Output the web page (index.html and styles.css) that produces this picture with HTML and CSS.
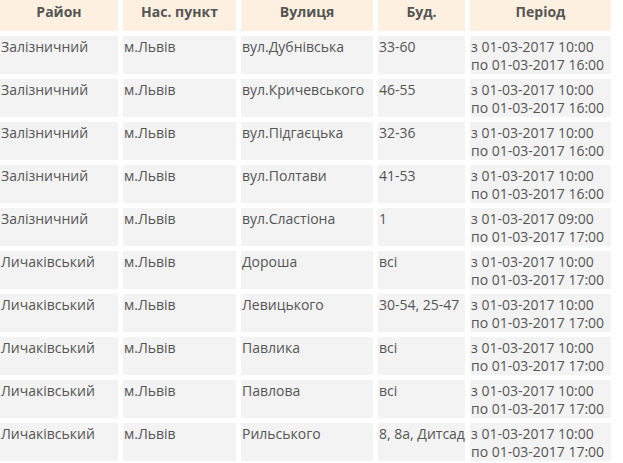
FILE: index.html
```html
<!DOCTYPE html>
<html lang="uk">
<head>
<meta charset="utf-8">
<title>Відключення</title>
<link rel="stylesheet" href="styles.css">
</head>
<body>
<table class="outages">
  <thead>
    <tr>
      <th class="c-district">Район</th>
      <th class="c-town">Нас. пункт</th>
      <th class="c-street">Вулиця</th>
      <th class="c-house">Буд.</th>
      <th class="c-period">Період</th>
    </tr>
  </thead>
  <tbody>
    <tr><td>Залізничний</td><td>м.Львів</td><td>вул.Дубнівська</td><td>33-60</td><td>з 01-03-2017 10:00<br>по 01-03-2017 16:00</td></tr>
    <tr><td>Залізничний</td><td>м.Львів</td><td>вул.Кричевського</td><td>46-55</td><td>з 01-03-2017 10:00<br>по 01-03-2017 16:00</td></tr>
    <tr><td>Залізничний</td><td>м.Львів</td><td>вул.Підгаєцька</td><td>32-36</td><td>з 01-03-2017 10:00<br>по 01-03-2017 16:00</td></tr>
    <tr><td>Залізничний</td><td>м.Львів</td><td>вул.Полтави</td><td>41-53</td><td>з 01-03-2017 10:00<br>по 01-03-2017 16:00</td></tr>
    <tr><td>Залізничний</td><td>м.Львів</td><td>вул.Сластіона</td><td>1</td><td>з 01-03-2017 09:00<br>по 01-03-2017 17:00</td></tr>
    <tr><td>Личаківський</td><td>м.Львів</td><td>Дороша</td><td>всі</td><td>з 01-03-2017 10:00<br>по 01-03-2017 17:00</td></tr>
    <tr><td>Личаківський</td><td>м.Львів</td><td>Левицького</td><td>30-54, 25-47</td><td>з 01-03-2017 10:00<br>по 01-03-2017 17:00</td></tr>
    <tr><td>Личаківський</td><td>м.Львів</td><td>Павлика</td><td>всі</td><td>з 01-03-2017 10:00<br>по 01-03-2017 17:00</td></tr>
    <tr><td>Личаківський</td><td>м.Львів</td><td>Павлова</td><td>всі</td><td>з 01-03-2017 10:00<br>по 01-03-2017 17:00</td></tr>
    <tr><td>Личаківський</td><td>м.Львів</td><td>Рильського</td><td>8, 8а, Дитсад</td><td>з 01-03-2017 10:00<br>по 01-03-2017 17:00</td></tr>
  </tbody>
</table>
</body>
</html>
```

FILE: styles.css
```css
html, body {
  margin: 0;
  padding: 0;
  background: #ffffff;
  overflow: hidden;
}

body {
  font-family: "Open Sans", "Noto Sans", sans-serif;
  font-size: 14px;
  color: #555555;
}

.outages {
  border-collapse: separate;
  border-spacing: 5px;
  table-layout: fixed;
  width: 621px;
  margin: -12px 0 0 -5px;
}

.outages th,
.outages td {
  box-sizing: border-box;
  vertical-align: top;
  text-align: left;
  white-space: nowrap;
  overflow: hidden;
}

.outages th {
  background: #fdf0e1;
  font-weight: 700;
  text-align: center;
  color: #555555;
  height: 38px;
  line-height: 19px;
  padding: 9px 2px 10px;
}

.outages td {
  background: #f3f3f3;
  height: 38px;
  line-height: 18px;
  padding: 2px 1px 0 1px;
}

.c-district { width: 118px; }
.c-town { width: 113px; }
.c-street { width: 132px; }
.c-house { width: 87px; }
.c-period { width: 141px; }
```
